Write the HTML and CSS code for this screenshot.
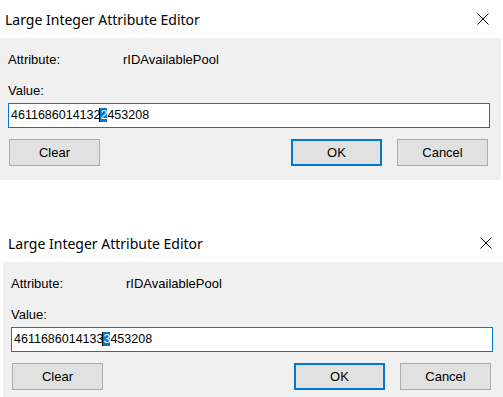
FILE: index.html
```html
<!DOCTYPE html>
<html lang="en">
<head>
  <meta charset="UTF-8">
  <title>Large Integer Attribute Editor</title>
  <link rel="stylesheet" href="styles.css">
</head>
<body>
  <div class="dialog">
    <div class="titlebar">
      <span class="title">Large Integer Attribute Editor</span>
      <svg class="close" width="12" height="12" viewBox="0 0 12 12">
        <path d="M0.5 0.5 L11.5 11.5 M11.5 0.5 L0.5 11.5" stroke="#000" stroke-width="1" fill="none"/>
      </svg>
    </div>
    <div class="panel">
      <div class="attr-row">
        <span class="label">Attribute:</span>
        <span class="attr-name">rIDAvailablePool</span>
      </div>
      <div class="value-label">Value:</div>
      <div class="value-box">4611686014132<span class="sel">2</span>453208</div>
      <div class="buttons">
        <button class="btn">Clear</button>
        <span class="spacer"></span>
        <button class="btn default">OK</button>
        <button class="btn">Cancel</button>
      </div>
    </div>
  </div>

  <div class="dialog second">
    <div class="titlebar">
      <span class="title">Large Integer Attribute Editor</span>
      <svg class="close" width="12" height="12" viewBox="0 0 12 12">
        <path d="M0.5 0.5 L11.5 11.5 M11.5 0.5 L0.5 11.5" stroke="#000" stroke-width="1" fill="none"/>
      </svg>
    </div>
    <div class="panel">
      <div class="attr-row">
        <span class="label">Attribute:</span>
        <span class="attr-name">rIDAvailablePool</span>
      </div>
      <div class="value-label">Value:</div>
      <div class="value-box">4611686014133<span class="sel">3</span>453208</div>
      <div class="buttons">
        <button class="btn">Clear</button>
        <span class="spacer"></span>
        <button class="btn default">OK</button>
        <button class="btn">Cancel</button>
      </div>
    </div>
  </div>
</body>
</html>
```

FILE: styles.css
```css
body {
  margin: 0;
  padding: 0;
  background-color: #ffffff;
  color: #000000;
  font-family: 'Liberation Sans', Arial, sans-serif;
  overflow: hidden;
}

.dialog {
  width: 501px;
}

.dialog.second {
  width: 500px;
  margin-top: 44px;
  margin-left: 3px;
}

.titlebar {
  height: 38px;
  box-sizing: border-box;
  display: flex;
  align-items: center;
  justify-content: space-between;
  padding: 0 12px 0 5px;
  background-color: #ffffff;
}

.second .titlebar {
  padding: 0 11px 0 5px;
}

.title {
  font-family: 'Noto Sans', sans-serif;
  font-size: 14px;
  color: #000;
}

.close {
  display: block;
}

.panel {
  height: 142px;
  box-sizing: border-box;
  padding: 14px 11px 0 8px;
  background-color: #f0f0f0;
  font-size: 13px;
}

.second .panel {
  height: 135px;
  padding: 14px 10px 0 8px;
}

.attr-row {
  display: flex;
  line-height: 16px;
}

.label {
  width: 115px;
}

.value-label {
  margin-top: 15px;
  line-height: 16px;
}

.value-box {
  margin-top: 4px;
  height: 25px;
  box-sizing: border-box;
  border: 1px solid #0078d7;
  background-color: #ffffff;
  padding: 0 0 0 2px;
  font-size: 12.5px;
  line-height: 23px;
  white-space: nowrap;
}

.sel {
  background-color: #0078d7;
  color: #ffffff;
  border-left: 1px solid #000;
  margin-left: -1px;
}

.buttons {
  display: flex;
  gap: 15px;
  margin-top: 11px;
  padding: 0 2px 0 1px;
}

.spacer {
  flex: 1;
}

.btn {
  width: 91px;
  height: 27px;
  box-sizing: border-box;
  border: 1px solid #adadad;
  background-color: #e1e1e1;
  font-family: 'Liberation Sans', Arial, sans-serif;
  font-size: 13px;
  color: #000;
  padding: 0;
}

.btn.default {
  border: 2px solid #0078d7;
}
```
